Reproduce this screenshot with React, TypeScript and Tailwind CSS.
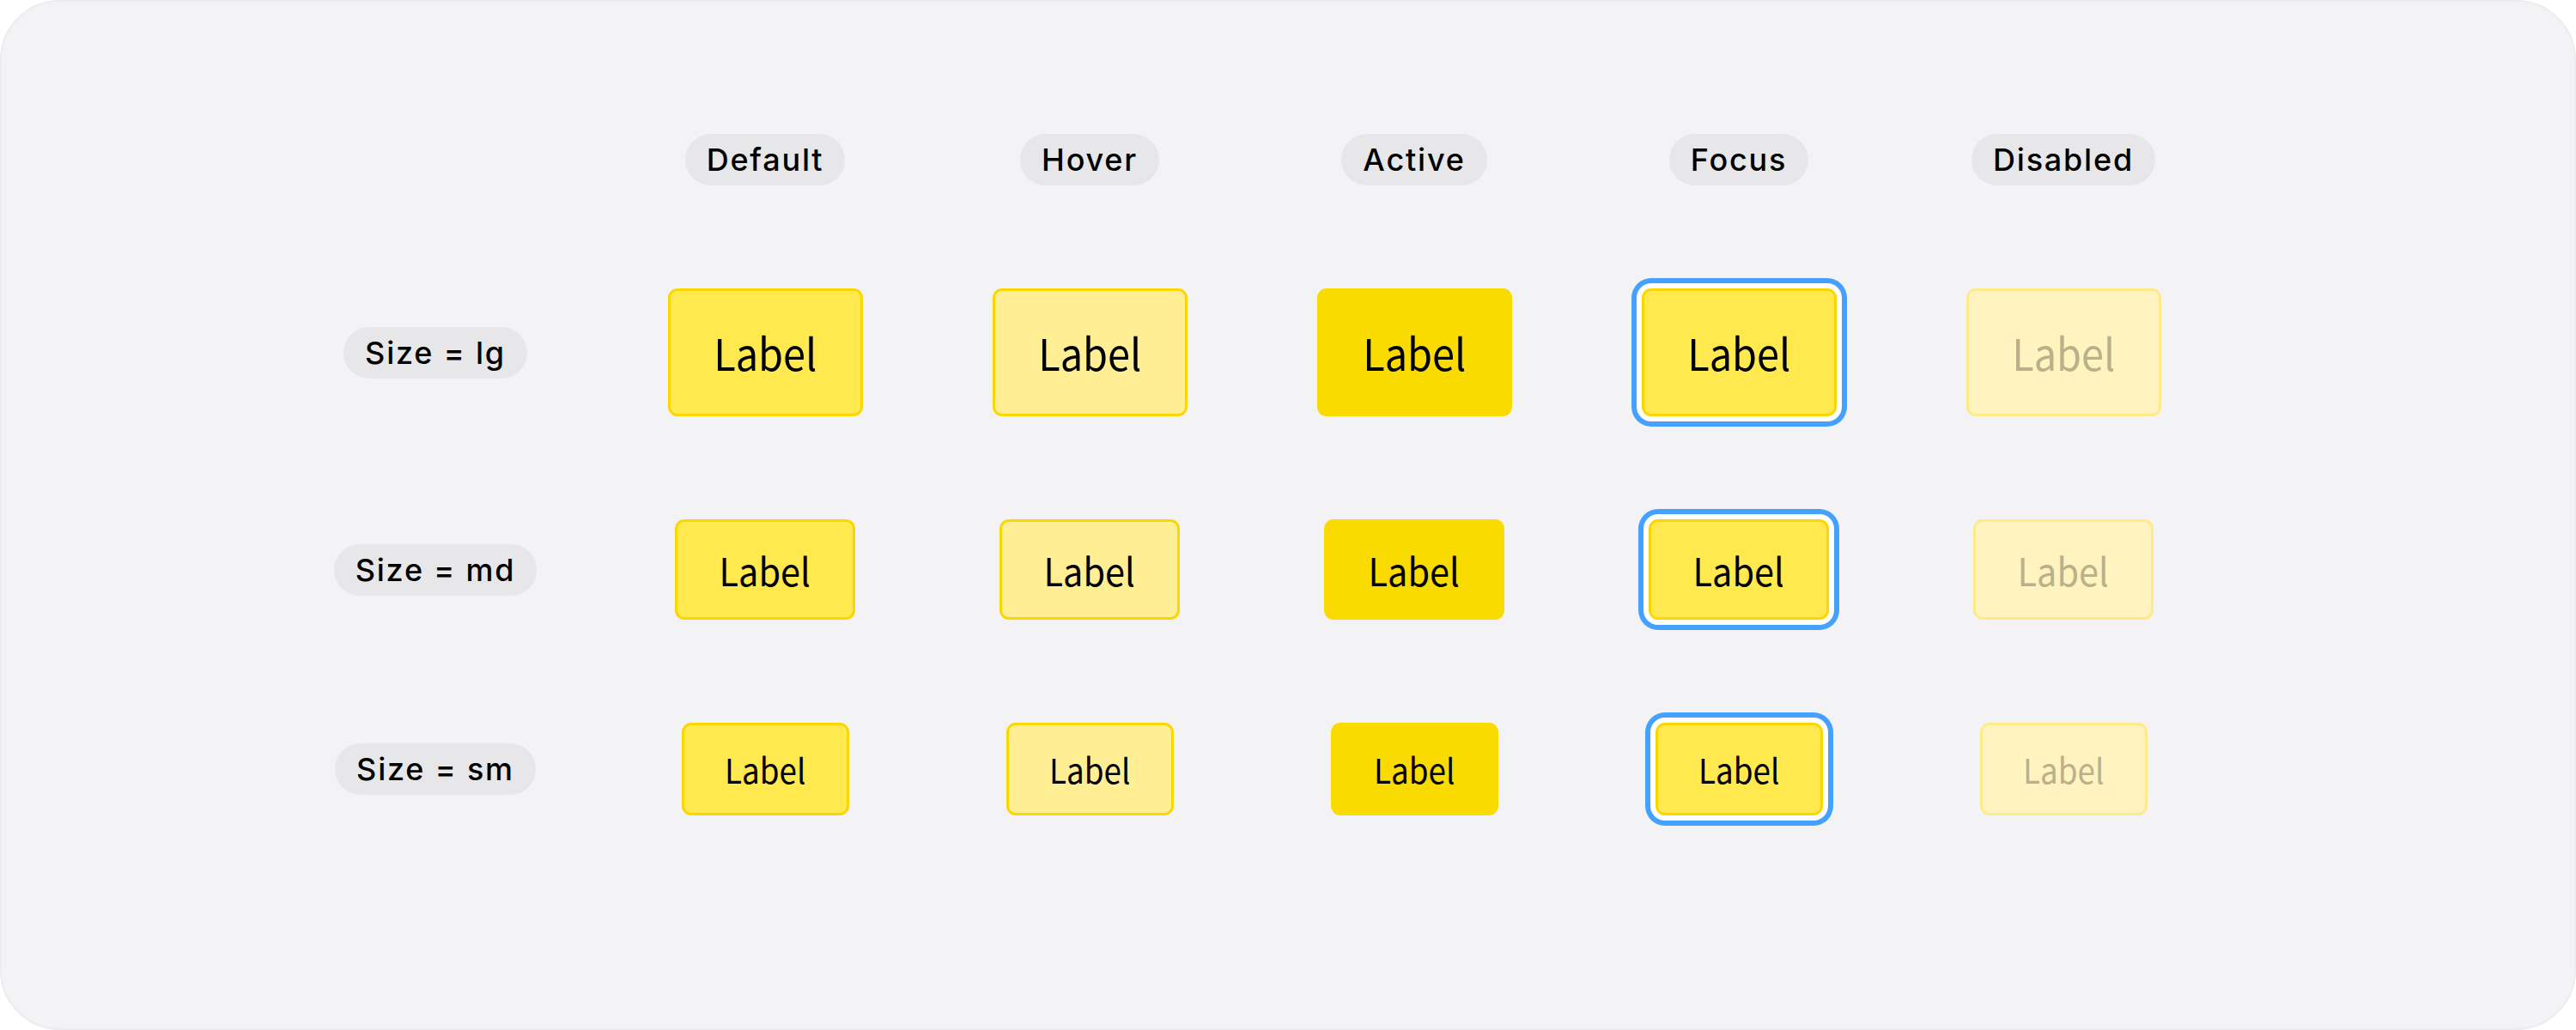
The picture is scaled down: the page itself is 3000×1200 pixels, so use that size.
const states = ['Default', 'Hover', 'Active', 'Focus', 'Disabled'];

const sizes = [
  { name: 'lg', box: 'w-[227px] h-[149px] text-[51px]' },
  { name: 'md', box: 'w-[210px] h-[117px] text-[45px]' },
  { name: 'sm', box: 'w-[195px] h-[108px] text-[40px]' },
];

const stateStyle: Record<string, string> = {
  Default: 'bg-[#ffe94f] border-[#fad700] text-black',
  Hover: 'bg-[#ffee94] border-[#fad700] text-black',
  Active: 'bg-[#fadb00] border-[#fadb00] text-black',
  Focus:
    'bg-[#ffe94f] border-[#fad700] text-black shadow-[0_0_0_6px_#ffffff,0_0_0_12px_#45a1ff]',
  Disabled: 'bg-[#fff4bf] border-[#ffea8a] text-[#bab18b]',
};

function Pill({ children }: { children: React.ReactNode }) {
  return (
    <div className="h-[60px] px-[25px] flex items-center rounded-full bg-[#e7e7e9] text-[36px] font-medium tracking-[0.05em] text-black font-['Inter',sans-serif] whitespace-nowrap">
      {children}
    </div>
  );
}

function DemoButton({ state, box }: { state: string; box: string }) {
  return (
    <div
      className={`${box} ${stateStyle[state]} flex items-center justify-center rounded-[11px] border-[3px] font-['Noto_Sans_CJK_SC','Noto_Sans',sans-serif] leading-none`}
    >
      <span className="inline-block scale-x-[0.92]">Label</span>
    </div>
  );
}

export default function App() {
  return (
    <div className="w-[3000px] h-[1200px] bg-white">
      <div className="w-full h-full rounded-[70px] border-2 border-[#ececee] bg-[#f3f3f5]">
        <div className="grid grid-cols-[390px_repeat(5,378px)] gap-y-[120px] items-center justify-items-center pt-[154px] pl-[310px]">
          {/* header row */}
          <div />
          {states.map((s) => (
            <Pill key={s}>{s}</Pill>
          ))}

          {sizes.map((size) => (
            <>
              <Pill key={size.name}>Size = {size.name}</Pill>
              {states.map((s) => (
                <DemoButton key={size.name + s} state={s} box={size.box} />
              ))}
            </>
          ))}
        </div>
      </div>
    </div>
  );
}
